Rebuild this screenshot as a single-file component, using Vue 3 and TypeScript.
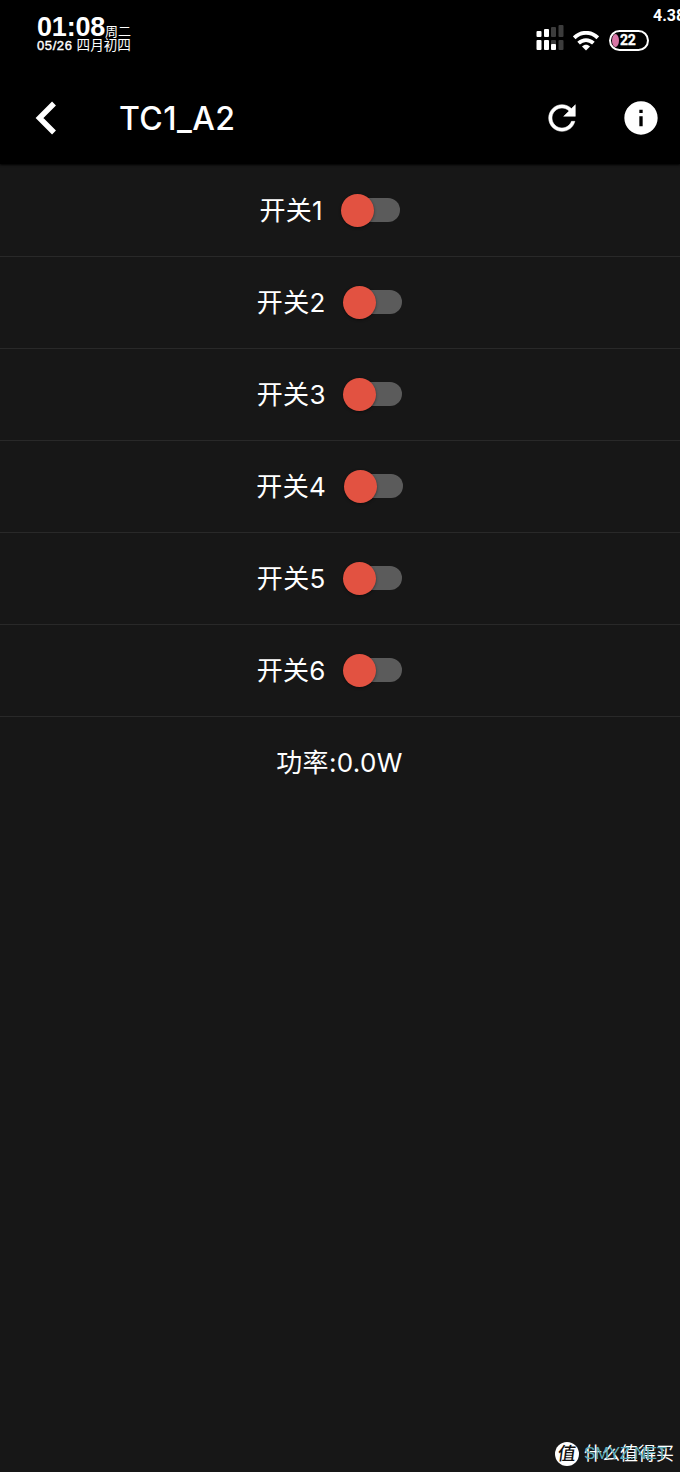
<script setup lang="ts">
import { ref } from 'vue'

interface Outlet {
  id: number
  on: boolean
}

const outlets = ref<Outlet[]>([1, 2, 3, 4, 5, 6].map((id) => ({ id, on: false })))
const power = ref('0.0')

function toggle(outlet: Outlet) {
  outlet.on = !outlet.on
}
</script>

<template>
  <main class="screen">
    <header class="top">
      <div class="status">
        <div class="clock">
          <div class="time-line"><span class="time">01:08</span><span class="weekday">周二</span></div>
          <div class="date"><span class="day">05/26</span><span>四月初四</span></div>
        </div>
        <div class="indicators">
          <svg class="signal" width="28" height="26" viewBox="0 0 28 26">
            <g fill="#fff">
              <rect x="0.5" y="6" width="5" height="6" rx="1" />
              <rect x="8" y="4" width="5" height="8" rx="1" />
              <rect x="0.5" y="15" width="5" height="10" rx="1" />
              <rect x="8" y="15" width="5" height="10" rx="1" />
            </g>
            <g fill="#3c3c3c">
              <rect x="15" y="2" width="5" height="10" rx="1" />
              <rect x="22.5" y="0" width="5" height="12" rx="1" />
              <rect x="15" y="15" width="5" height="10" rx="1" />
              <rect x="22.5" y="15" width="5" height="10" rx="1" />
            </g>
            <rect x="15" y="19" width="5" height="6" rx="1" fill="#fff" />
          </svg>
          <svg class="wifi" width="26" height="20" viewBox="0 0 26 20">
            <g fill="none" stroke="#fff" stroke-width="3.8">
              <path d="M1.2 6.8C8 .1 18 .1 24.8 6.8" />
              <path d="M5.6 12.1C10 8 16 8 20.4 12.1" />
            </g>
            <path d="M9 15.4C11.4 13.2 14.6 13.2 17 15.4L13 19.5Z" fill="#fff" />
          </svg>
          <div class="battery"><i class="charge"></i><span>22</span></div>
        </div>
        <span class="rate">4.38</span>
      </div>
      <nav class="bar">
        <svg class="back" width="22" height="34" viewBox="0 0 22 34">
          <path d="M19 2.5L4.5 17L19 31.5" fill="none" stroke="#fff" stroke-width="5.5" />
        </svg>
        <h1>TC1_A2</h1>
        <svg class="refresh" width="40" height="40" viewBox="0 0 24 24">
          <path fill="#fff" d="M17.65 6.35C16.2 4.9 14.21 4 12 4c-4.42 0-7.99 3.58-7.99 8s3.57 8 7.99 8c3.73 0 6.84-2.55 7.73-6h-2.08c-.82 2.33-3.04 4-5.65 4-3.31 0-6-2.69-6-6s2.69-6 6-6c1.66 0 3.14.69 4.22 1.78L13 11h7V4l-2.35 2.35z" stroke="#fff" stroke-width="0.3" />
        </svg>
        <svg class="info" width="40" height="40" viewBox="0 0 24 24">
          <path fill="#fff" d="M12 2C6.48 2 2 6.48 2 12s4.48 10 10 10 10-4.48 10-10S17.52 2 12 2zm1 15h-2v-6h2v6zm0-8h-2V7h2v2z" />
        </svg>
      </nav>
    </header>

    <section class="list">
      <div v-for="outlet in outlets" :key="outlet.id" class="row">
        <span class="label">开关{{ outlet.id }}</span>
        <button
          class="switch"
          :class="{ on: outlet.on }"
          role="switch"
          :aria-checked="outlet.on"
          @click="toggle(outlet)"
        >
          <i class="thumb"></i>
        </button>
      </div>
      <div class="power">功率:{{ power }}W</div>
    </section>

    <footer class="mark">
      <span class="seal"><span>值</span></span>
      <span class="names"><span class="brand">什么值得买</span><span class="site">SMYZ.NET</span></span>
    </footer>
  </main>
</template>

<style>
body {
  background: #171717;
}
</style>

<style scoped>
.screen {
  width: 680px;
  height: 1472px;
  display: flex;
  flex-direction: column;
  overflow: hidden;
  background: #171717;
  color: #fff;
  font-family: Inter, "Noto Sans CJK SC", sans-serif;
}
.top {
  height: 164px;
  background: #000;
  box-shadow: 0 1px 2px #000;
}
.status {
  height: 72px;
  display: flex;
  justify-content: space-between;
  position: relative;
}
.clock {
  padding: 14px 0 0 37px;
  font-family: "Liberation Sans", "Noto Sans CJK SC", sans-serif;
  white-space: nowrap;
}
.time-line {
  display: flex;
  align-items: baseline;
  height: 24px;
  line-height: 26px;
}
.time {
  font-size: 27px;
  font-weight: 700;
  letter-spacing: -0.2px;
}
.weekday {
  font-size: 13px;
}
.date {
  display: flex;
  gap: 4px;
  font-size: 13.6px;
  line-height: 15px;
}
.day {
  font-size: 13px;
  letter-spacing: 0.6px;
  -webkit-text-stroke: 0.4px #fff;
}
.indicators {
  display: flex;
  align-items: flex-start;
  padding: 25px 31px 0 0;
}
.wifi {
  margin: 6px 0 0 9px;
}
.battery {
  width: 40px;
  height: 21px;
  box-sizing: border-box;
  margin: 5px 0 0 10px;
  border: 2px solid #fff;
  border-radius: 11px;
  display: flex;
  align-items: center;
  padding-left: 1px;
  font: 700 14px/17px Roboto, sans-serif;
  letter-spacing: -0.4px;
  -webkit-text-stroke: 0.3px #fff;
}
.charge {
  width: 7px;
  height: 13px;
  margin-right: 1px;
  border-radius: 50%;
  background: #d875a5;
}
.rate {
  position: absolute;
  left: 653px;
  top: 6px;
  font: 700 16px/19px Roboto, sans-serif;
}
.bar {
  height: 92px;
  display: flex;
  align-items: center;
}
.back {
  margin-left: 35px;
}
h1 {
  margin: 2px auto 0 62px;
  font-size: 32px;
  line-height: 40px;
  font-weight: 500;
  letter-spacing: 0.4px;
}
.refresh {
  margin-right: 38.5px;
}
.info {
  margin-right: 19.5px;
}
.list {
  flex: 1;
  padding-top: 1px;
}
.row {
  height: 92px;
  box-sizing: border-box;
  border-bottom: 1px solid #292929;
  padding-right: 21px;
  display: flex;
  align-items: center;
  justify-content: center;
}
.label,
.power {
  font-size: 26px;
  line-height: 36px;
  letter-spacing: 0.35px;
}
.label {
  padding-top: 1px;
}
.switch {
  width: 59px;
  height: 24px;
  margin: 0 0 1px 17.5px;
  padding: 0;
  border: 0;
  display: flex;
  align-items: center;
  background: linear-gradient(90deg, transparent 10px, #5b5b5b 10px);
  border-radius: 12px;
}
.switch.on {
  justify-content: flex-end;
}
.thumb {
  width: 33px;
  height: 33px;
  flex: none;
  border-radius: 50%;
  background: #e25241;
  box-shadow: 0 1px 3px rgba(0, 0, 0, 0.45);
}
.power {
  height: 92px;
  line-height: 92px;
  padding-right: 1px;
  text-align: center;
}
.mark {
  height: 26px;
  margin: 0 5px 5px 0;
  display: flex;
  justify-content: flex-end;
  align-items: center;
}
.seal {
  width: 24px;
  height: 24px;
  margin-right: 5px;
  border-radius: 50%;
  background: #fff;
  color: #111;
  font-size: 18px;
  font-weight: 500;
  line-height: 23px;
  text-align: center;
}
.seal span {
  display: block;
  transform: skewX(-8deg);
}
.names {
  display: grid;
  align-items: center;
  width: 91px;
  white-space: nowrap;
}
.names > span {
  grid-area: 1 / 1;
}
.site {
  color: #5eacb9;
  font-family: "Liberation Sans", sans-serif;
  font-size: 17px;
  line-height: 24px;
  letter-spacing: -0.4px;
}
.brand {
  font-size: 18px;
  line-height: 26px;
}
</style>
